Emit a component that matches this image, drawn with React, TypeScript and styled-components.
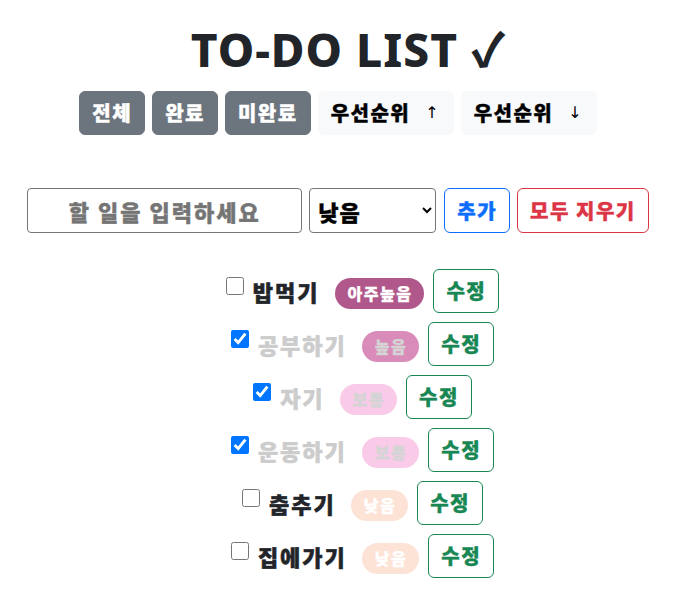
import React, { useState } from "react";
import styled, { createGlobalStyle } from "styled-components";

const GlobalStyle = createGlobalStyle`
  html, body { margin: 0; padding: 0; background: #fff; }
  body {
    font-family: "Noto Sans CJK KR", "Noto Sans", sans-serif;
    font-weight: 900;
    color: #212529;
  }
  * { box-sizing: border-box; }
`;

const Page = styled.div`
  display: flex;
  flex-direction: column;
  align-items: center;
  padding-top: 22px;
`;

const Title = styled.h1`
  margin: 0;
  font-family: "Noto Sans", "Noto Sans CJK KR", sans-serif;
  font-size: 46px;
  line-height: 54px;
  font-weight: 800;
  letter-spacing: 1px;
  color: #212529;
`;

const FilterRow = styled.div`
  display: flex;
  gap: 7px;
  margin-top: 15px;
  padding-right: 21px;
`;

const FilterButton = styled.button<{ $variant: "gray" | "light" }>`
  font-family: inherit;
  font-weight: 900;
  font-size: 20px;
  line-height: 30px;
  letter-spacing: 1.5px;
  -webkit-text-stroke: 0.4px currentColor;
  padding: 6px 12px;
  border-radius: 6px;
  border: 1px solid ${(p) => (p.$variant === "gray" ? "#6c757d" : "#f8f9fa")};
  background: ${(p) => (p.$variant === "gray" ? "#6c757d" : "#f8f9fa")};
  color: ${(p) => (p.$variant === "gray" ? "#fff" : "#000")};
  display: flex;
  align-items: center;
  gap: 15px;
`;

const Arrow = styled.span`
  font-family: "DejaVu Sans", sans-serif;
  font-weight: 400;
  font-size: 16px;
  letter-spacing: 0;
  -webkit-text-stroke: 0;
  padding-right: 2px;
`;

const InputRow = styled.div`
  display: flex;
  gap: 7px;
  margin-top: 53px;
  padding-right: 21px;
`;

const TextInput = styled.input`
  width: 275px;
  height: 45px;
  border: 1px solid #767676;
  border-radius: 4px;
  font-family: inherit;
  font-weight: 900;
  font-size: 22px;
  letter-spacing: 2px;
  text-align: center;
  &::placeholder {
    color: #757575;
    -webkit-text-stroke: 0.4px #757575;
  }
`;

const Select = styled.select`
  width: 127px;
  height: 45px;
  border: 1px solid #767676;
  border-radius: 4px;
  font-family: inherit;
  font-weight: 900;
  font-size: 22px;
  letter-spacing: 1px;
  -webkit-text-stroke: 0.4px #000;
  padding-left: 4px;
  background: #fff;
  color: #000;
`;

const OutlineButton = styled.button<{ $color: string; $ml?: number }>`
  font-family: inherit;
  font-weight: 900;
  font-size: 20px;
  line-height: 30px;
  letter-spacing: 1.5px;
  -webkit-text-stroke: 0.4px currentColor;
  padding: 6px 12px;
  border-radius: 6px;
  border: 1px solid ${(p) => p.$color};
  background: #fff;
  color: ${(p) => p.$color};
  margin-left: ${(p) => p.$ml ?? 0}px;
`;

const List = styled.ul`
  list-style: none;
  margin: 36px 0 0;
  padding: 0 0 0 28px;
  display: flex;
  flex-direction: column;
  align-items: center;
  gap: 9px;
`;

const Item = styled.li<{ $done: boolean }>`
  display: flex;
  align-items: center;
  height: 44px;
  color: ${(p) => (p.$done ? "#cccccc" : "#212529")};
`;

const Check = styled.input`
  width: 18px;
  height: 18px;
  margin: 0 9px 10px 0;
`;

const ItemText = styled.span`
  font-size: 22px;
  line-height: 30px;
  font-weight: 900;
  letter-spacing: 2px;
  -webkit-text-stroke: 0.5px currentColor;
`;

const Badge = styled.span<{ $bg: string; $done: boolean }>`
  margin: 5px 9px 0 15px;
  height: 31px;
  padding: 0 12px 0 13px;
  border-radius: 16px;
  background: ${(p) => p.$bg};
  color: ${(p) => (p.$done ? "#d4d4d4" : "#fff")};
  font-size: 16px;
  line-height: 31px;
  font-weight: 900;
  letter-spacing: 1.5px;
  -webkit-text-stroke: 0.3px currentColor;
`;

const EditButton = styled.button`
  font-family: inherit;
  font-weight: 900;
  font-size: 20px;
  line-height: 30px;
  letter-spacing: 1.5px;
  -webkit-text-stroke: 0.4px currentColor;
  padding: 6px 12px;
  border-radius: 6px;
  border: 1px solid #198754;
  background: #fff;
  color: #198754;
`;

const priorityColors: Record<string, string> = {
  아주높음: "#b0588b",
  높음: "#d98bb9",
  보통: "#f9cbe8",
  낮음: "#fde2d6",
};

const initial = [
  { id: 1, text: "밥먹기", priority: "아주높음", done: false },
  { id: 2, text: "공부하기", priority: "높음", done: true },
  { id: 3, text: "자기", priority: "보통", done: true },
  { id: 4, text: "운동하기", priority: "보통", done: true },
  { id: 5, text: "춤추기", priority: "낮음", done: false },
  { id: 6, text: "집에가기", priority: "낮음", done: false },
];

export default function App() {
  const [todos, setTodos] = useState(initial);
  const toggle = (id: number) =>
    setTodos((t) => t.map((x) => (x.id === id ? { ...x, done: !x.done } : x)));

  return (
    <>
      <GlobalStyle />
      <Page>
        <Title>TO-DO LIST ✓</Title>
        <FilterRow>
          <FilterButton $variant="gray">전체</FilterButton>
          <FilterButton $variant="gray">완료</FilterButton>
          <FilterButton $variant="gray">미완료</FilterButton>
          <FilterButton $variant="light">
            우선순위 <Arrow>↑</Arrow>
          </FilterButton>
          <FilterButton $variant="light">
            우선순위 <Arrow>↓</Arrow>
          </FilterButton>
        </FilterRow>
        <InputRow>
          <TextInput placeholder="할 일을 입력하세요" />
          <Select defaultValue="낮음">
            <option>아주높음</option>
            <option>높음</option>
            <option>보통</option>
            <option>낮음</option>
          </Select>
          <OutlineButton $color="#0d6efd" $ml={1}>추가</OutlineButton>
          <OutlineButton $color="#dc3545">모두 지우기</OutlineButton>
        </InputRow>
        <List>
          {todos.map((t) => (
            <Item key={t.id} $done={t.done}>
              <Check type="checkbox" checked={t.done} onChange={() => toggle(t.id)} />
              <ItemText>{t.text}</ItemText>
              <Badge $bg={priorityColors[t.priority]} $done={t.done}>
                {t.priority}
              </Badge>
              <EditButton>수정</EditButton>
            </Item>
          ))}
        </List>
      </Page>
    </>
  );
}
